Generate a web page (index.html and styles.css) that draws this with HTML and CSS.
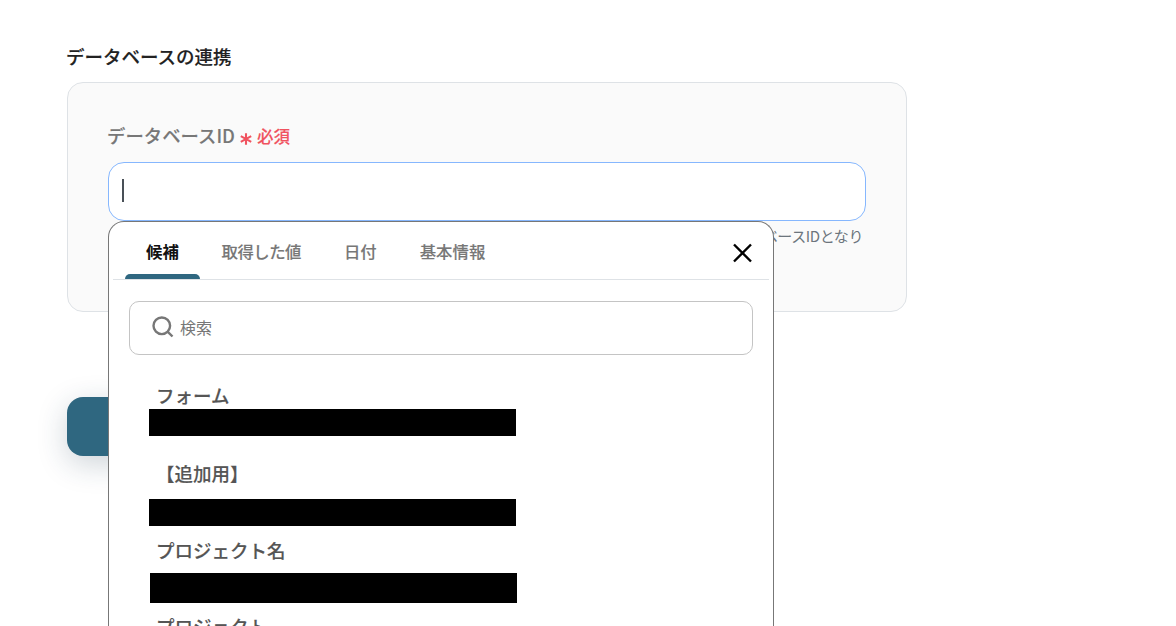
FILE: index.html
```html
<!DOCTYPE html>
<html lang="ja">
<head>
    <meta charset="UTF-8">
    <meta name="viewport" content="width=device-width, initial-scale=1.0">
    <title>データベースの連携</title>
    <link rel="stylesheet" href="styles.css">
</head>
<body>

<main class="page">
    <h2 class="title">データベースの連携</h2>

    <section class="panel">
        <label class="label" for="databaseId">
            <span class="label-text">データベースID</span>
            <svg class="asterisk" viewBox="0 0 12 12" width="12" height="12">
                <path d="M6 0.3V11.7M0.8 3.2L11.2 8.8M11.2 3.2L0.8 8.8"/>
            </svg>
            <span class="required">必須</span>
        </label>

        <div class="field">
            <div class="input" id="databaseId"><span class="caret"></span></div>

            <div class="popup">
                <div class="tabs">
                    <div class="tab active">候補</div>
                    <div class="tab acquired">取得した値</div>
                    <div class="tab">日付</div>
                    <div class="tab">基本情報</div>
                    <svg class="close" viewBox="0 0 20 20" width="20" height="20">
                        <path d="M1 1.5L18 18.5M18 1.5L1 18.5"/>
                    </svg>
                </div>

                <div class="search">
                    <svg class="search-icon" viewBox="0 0 22 22" width="22" height="22">
                        <circle cx="9.8" cy="9.8" r="8.3"/>
                        <path d="M15.8 15.8L20.5 20.5"/>
                    </svg>
                    <span class="placeholder">検索</span>
                </div>

                <ul class="list">
                    <li class="item form"><span class="name">フォーム</span><span class="value"></span></li>
                    <li class="item addition"><span class="name">【追加用】</span><span class="value"></span></li>
                    <li class="item project-name"><span class="name">プロジェクト名</span><span class="value"></span></li>
                    <li class="item project"><span class="name">プロジェクト</span></li>
                </ul>
            </div>
        </div>

        <p class="help">データベースIDとなり</p>
    </section>

    <button class="save" type="button"></button>
</main>

</body>
</html>
```

FILE: styles.css
```css
* {
    box-sizing: border-box;
}

body {
    margin: 0;
    height: 626px;
    overflow: hidden;
    background-color: #fff;
    font-family: 'Noto Sans CJK JP', sans-serif;
}

.page {
    width: 907px;
    padding: 41px 0 0 67px;
}

.title {
    margin: 0 0 11px -1px;
    color: #222;
    font-size: 18.5px;
    font-weight: 500;
    line-height: 30px;
    -webkit-text-stroke: 0.15px #222;
}

.panel {
    height: 230px;
    padding: 37px 40px 0;
    border: 1px solid #dee2e6;
    border-radius: 16px;
    background-color: #fafafa;
}

.label {
    display: flex;
    align-items: center;
    height: 30px;
    margin: 0 0 12px -1px;
    color: #777;
    font-size: 18.4px;
    font-weight: 500;
    line-height: 30px;
    -webkit-text-stroke: 0.12px;
}

.asterisk {
    margin: 7px 5px 0;
    fill: none;
    stroke: #f0525f;
    stroke-width: 2.1;
}

.required {
    padding-top: 1px;
    color: #f0525f;
    font-size: 16.5px;
}

.field {
    position: relative;
}

.input {
    display: flex;
    align-items: center;
    height: 59px;
    padding: 0 13px 2px;
    border: 1px solid #86b7fe;
    border-radius: 16px;
    background-color: #fff;
}

.caret {
    width: 2px;
    height: 23px;
    background-color: #495057;
}

.help {
    margin: 3px 3px 0 0;
    color: #6c757d;
    font-size: 15px;
    letter-spacing: -0.4px;
    line-height: 24px;
    text-align: right;
}

/* suggestion popup under the input */
.popup {
    position: absolute;
    top: 59px;
    left: 0;
    width: 666px;
    height: 405px;
    padding: 0 4px;
    overflow: hidden;
    border: 1px solid #777;
    border-bottom: none;
    border-radius: 16px 16px 0 0;
    background-color: #fff;
}

.tabs {
    display: flex;
    height: 58px;
    padding-left: 12px;
    border-bottom: 1px solid #dee2e6;
}

.tab {
    padding: 15px 21.5px 0;
    color: #777;
    font-size: 16.4px;
    font-weight: 500;
    line-height: 28px;
    white-space: nowrap;
    -webkit-text-stroke: 0.12px;
}

.tab.active {
    display: flex;
    flex-direction: column;
    justify-content: space-between;
    width: 75px;
    padding-right: 0;
    padding-left: 21px;
    color: #111;
    font-weight: 700;
    -webkit-text-stroke: 0;
}

.tab.active::after {
    content: '';
    width: 75px;
    height: 5px;
    margin-left: -21px;
    border-radius: 5px 5px 0 0;
    background-color: #2f6780;
}

.tab.acquired {
    letter-spacing: -0.5px;
}

.close {
    margin: 21px 16px 0 auto;
    fill: none;
    stroke: #000;
    stroke-width: 2.4;
}

.search {
    display: flex;
    align-items: center;
    height: 54px;
    margin: 21px 16px 0;
    padding-left: 22px;
    border: 1px solid #c4c4c4;
    border-radius: 10px;
}

.search-icon {
    margin-top: -3px;
    fill: none;
    stroke: #777;
    stroke-width: 2.4;
}

.placeholder {
    margin: -2px 0 0 6px;
    color: #777;
    font-size: 16px;
}

.list {
    margin: 26px 0 0 36px;
    padding: 0;
    list-style: none;
}

.item {
    height: 78px;
}

.name {
    display: block;
    padding-left: 7px;
    color: #555;
    font-size: 18.5px;
    font-weight: 500;
    line-height: 28px;
    -webkit-text-stroke: 0.15px;
}

.value {
    display: block;
    width: 367px;
    height: 27px;
    background-color: #000;
}

.addition {
    height: 77px;
}

.addition .value {
    margin-top: 12px;
}

.project-name {
    height: 76px;
}

.project-name .value {
    height: 30px;
    margin: 9px 0 0 1px;
}

.project {
    height: 28px;
}

.save {
    display: block;
    width: 180px;
    height: 59px;
    margin-top: 85px;
    border: none;
    border-radius: 16px;
    background-color: #2f6780;
    box-shadow: 0 8px 30px rgba(33, 60, 80, 0.22);
}
```
